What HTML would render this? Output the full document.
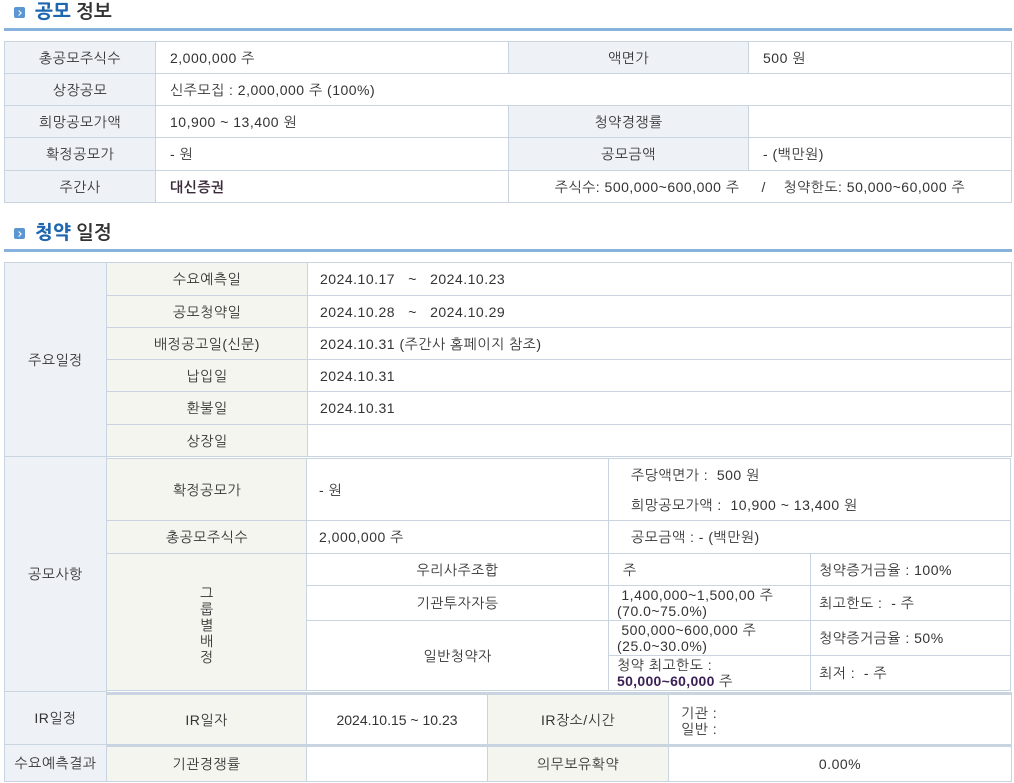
<!DOCTYPE html>
<html><head><meta charset="utf-8"><style>
body{margin:0;width:1014px;height:783px;background:#fff;position:relative;overflow:hidden;font-family:"Liberation Sans","NanumGothic","Noto Sans CJK KR",sans-serif;font-size:14px;color:#333;letter-spacing:0.5px}
.c{position:absolute;box-sizing:border-box;border:1px solid #c8d4e0;display:flex;align-items:center;justify-content:center;background:#fff;line-height:16px;white-space:nowrap}
.l{justify-content:flex-start;padding-left:14px}
.h{background:#eef2f7}
.g{background:#f5f5f0}
.t{position:absolute;font-size:19px;font-weight:bold;color:#333;font-family:"NanumGothic","Noto Sans CJK KR",sans-serif;letter-spacing:0}
.t b{color:#1f66b0}
.ico{position:absolute;width:11px;height:11px;background:#5b95d2;border-radius:2px}
.ico:after{content:"";position:absolute;left:3px;top:3.5px;width:3px;height:3px;border-top:1.5px solid #fff;border-right:1.5px solid #fff;transform:rotate(45deg)}
.ln{position:absolute;left:4px;width:1008px;height:3px;background:#86b2dc}
</style></head><body>
<div class="ico" style="left:14px;top:7px"></div>
<div class="t" style="left:35px;top:2px"><b>공모</b> 정보</div>
<div class="ln" style="top:28px"></div>

<div class="c h" style="left:4px;top:41px;width:152px;height:33px">총공모주식수</div>
<div class="c l" style="left:155px;top:41px;width:354px;height:33px">2,000,000 주</div>
<div class="c h" style="left:508px;top:41px;width:241px;height:33px">액면가</div>
<div class="c l" style="left:748px;top:41px;width:264px;height:33px">500 원</div>
<div class="c h" style="left:4px;top:73px;width:152px;height:33px">상장공모</div>
<div class="c l" style="left:155px;top:73px;width:857px;height:33px">신주모집 : 2,000,000 주 (100%)</div>
<div class="c h" style="left:4px;top:105px;width:152px;height:33px">희망공모가액</div>
<div class="c l" style="left:155px;top:105px;width:354px;height:33px">10,900 ~ 13,400 원</div>
<div class="c h" style="left:508px;top:105px;width:241px;height:33px">청약경쟁률</div>
<div class="c l" style="left:748px;top:105px;width:264px;height:33px"></div>
<div class="c h" style="left:4px;top:137px;width:152px;height:34px">확정공모가</div>
<div class="c l" style="left:155px;top:137px;width:354px;height:34px">- 원</div>
<div class="c h" style="left:508px;top:137px;width:241px;height:34px">공모금액</div>
<div class="c l" style="left:748px;top:137px;width:264px;height:34px">- (백만원)</div>
<div class="c h" style="left:4px;top:170px;width:152px;height:33px">주간사</div>
<div class="c l" style="left:155px;top:170px;width:354px;height:33px;font-weight:bold;color:#3a2a3a">대신증권</div>
<div class="c" style="left:508px;top:170px;width:504px;height:33px">주식수: 500,000~600,000 주 &nbsp; &nbsp; / &nbsp; &nbsp;청약한도: 50,000~60,000 주</div>

<div class="ico" style="left:14px;top:228px"></div>
<div class="t" style="left:35px;top:223px"><b>청약</b> 일정</div>
<div class="ln" style="top:249px"></div>

<div class="c h" style="left:4px;top:262px;width:103px;height:195px">주요일정</div>
<div class="c g" style="left:106px;top:262px;width:202px;height:34px">수요예측일</div>
<div class="c l" style="left:307px;top:262px;width:705px;height:34px;padding-left:12px">2024.10.17 &nbsp; ~ &nbsp; 2024.10.23</div>
<div class="c g" style="left:106px;top:295px;width:202px;height:33px">공모청약일</div>
<div class="c l" style="left:307px;top:295px;width:705px;height:33px;padding-left:12px">2024.10.28 &nbsp; ~ &nbsp; 2024.10.29</div>
<div class="c g" style="left:106px;top:327px;width:202px;height:33px">배정공고일(신문)</div>
<div class="c l" style="left:307px;top:327px;width:705px;height:33px;padding-left:12px">2024.10.31 (주간사 홈페이지 참조)</div>
<div class="c g" style="left:106px;top:359px;width:202px;height:33px">납입일</div>
<div class="c l" style="left:307px;top:359px;width:705px;height:33px;padding-left:12px">2024.10.31</div>
<div class="c g" style="left:106px;top:391px;width:202px;height:34px">환불일</div>
<div class="c l" style="left:307px;top:391px;width:705px;height:34px;padding-left:12px">2024.10.31</div>
<div class="c g" style="left:106px;top:424px;width:202px;height:33px">상장일</div>
<div class="c l" style="left:307px;top:424px;width:705px;height:33px"></div>

<div class="c h" style="left:4px;top:456px;width:103px;height:236px">공모사항</div>
<div class="c g" style="left:106px;top:458px;width:202px;height:63px">확정공모가</div>
<div class="c l" style="left:306px;top:458px;width:303px;height:63px;padding-left:12px">- 원</div>
<div class="c l" style="left:608px;top:458px;width:403px;height:63px;padding-left:22px;flex-direction:column;align-items:flex-start;justify-content:center;line-height:30px">주당액면가 : &nbsp;500 원<br>희망공모가액 : &nbsp;10,900 ~ 13,400 원</div>
<div class="c g" style="left:106px;top:520px;width:202px;height:34px">총공모주식수</div>
<div class="c l" style="left:306px;top:520px;width:303px;height:34px;padding-left:12px">2,000,000 주</div>
<div class="c l" style="left:608px;top:520px;width:403px;height:34px;padding-left:22px">공모금액 : - (백만원)</div>
<div class="c g" style="left:106px;top:553px;width:202px;height:138px;flex-direction:column;line-height:16px;padding-top:6px">그<br>룹<br>별<br>배<br>정</div>
<div class="c" style="left:306px;top:553px;width:303px;height:33px">우리사주조합</div>
<div class="c l" style="left:608px;top:553px;width:203px;height:33px;padding-left:14px">주</div>
<div class="c l" style="left:810px;top:553px;width:201px;height:33px;padding-left:8px">청약증거금율 : 100%</div>
<div class="c" style="left:306px;top:585px;width:303px;height:36px">기관투자자등</div>
<div class="c l" style="left:608px;top:585px;width:203px;height:36px;padding-left:8px;display:block;padding-top:1px;line-height:16px">&nbsp;1,400,000~1,500,00 주<br>(70.0~75.0%)</div>
<div class="c l" style="left:810px;top:585px;width:201px;height:36px;padding-left:8px">최고한도 : &nbsp;- 주</div>
<div class="c" style="left:306px;top:620px;width:303px;height:71px">일반청약자</div>
<div class="c l" style="left:608px;top:620px;width:203px;height:36px;padding-left:8px;display:block;padding-top:1px;line-height:16px">&nbsp;500,000~600,000 주<br>(25.0~30.0%)</div>
<div class="c l" style="left:810px;top:620px;width:201px;height:36px;padding-left:8px">청약증거금율 : 50%</div>
<div class="c l" style="left:608px;top:655px;width:203px;height:36px;padding-left:8px;display:block;padding-top:1px;line-height:16px">청약 최고한도 :<br><b style="color:#3a1f55;letter-spacing:0.3px">50,000~60,000</b> 주</div>
<div class="c l" style="left:810px;top:655px;width:201px;height:36px;padding-left:8px">최저 : &nbsp;- 주</div>

<div class="c h" style="left:4px;top:691px;width:103px;height:54px">IR일정</div>
<div class="c g" style="left:106px;top:692px;width:201px;height:53px;border-top:3px solid #c8d4e0">IR일자</div>
<div class="c" style="left:306px;top:692px;width:182px;height:53px;border-top:3px solid #c8d4e0;letter-spacing:0">2024.10.15 ~ 10.23</div>
<div class="c g" style="left:487px;top:692px;width:182px;height:53px;border-top:3px solid #c8d4e0">IR장소/시간</div>
<div class="c l" style="left:668px;top:692px;width:344px;height:53px;padding-left:12px;display:block;padding-top:10px;line-height:16px;border-top:3px solid #c8d4e0">기관 :<br>일반 :</div>

<div class="c h" style="left:4px;top:744px;width:103px;height:38px">수요예측결과</div>
<div class="c g" style="left:106px;top:744px;width:201px;height:38px;border-top:3px solid #c8d4e0">기관경쟁률</div>
<div class="c" style="left:306px;top:744px;width:182px;height:38px;border-top:3px solid #c8d4e0"></div>
<div class="c g" style="left:487px;top:744px;width:182px;height:38px;border-top:3px solid #c8d4e0">의무보유확약</div>
<div class="c" style="left:668px;top:744px;width:344px;height:38px;border-top:3px solid #c8d4e0">0.00%</div>
</body></html>
